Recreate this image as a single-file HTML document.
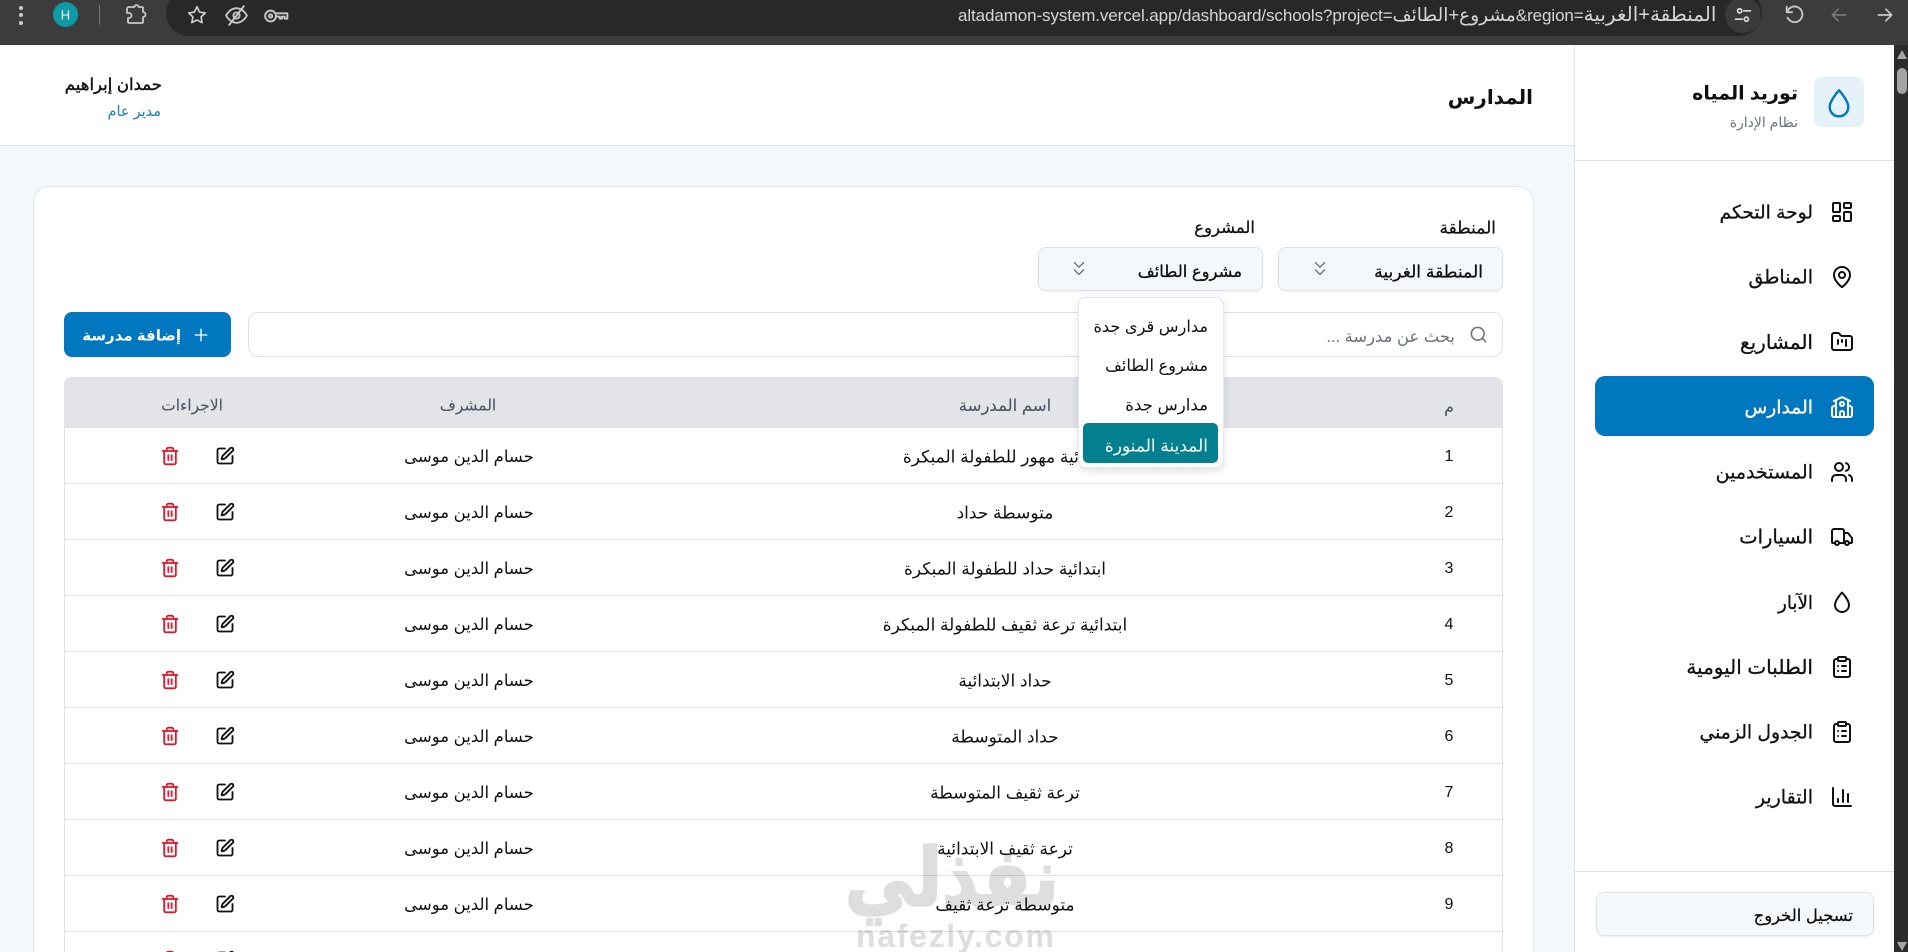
<!DOCTYPE html>
<html lang="ar">
<head>
<meta charset="utf-8">
<title>المدارس</title>
<style>
*{box-sizing:border-box;margin:0;padding:0}
html,body{width:1908px;height:952px;overflow:hidden;background:#f5f8fb;font-family:"Liberation Sans","DejaVu Sans",sans-serif;color:#111}
#w{position:relative;width:1908px;height:952px;overflow:hidden;background:#f5f8fb}
.a{position:absolute}
.t{position:absolute;white-space:nowrap;line-height:1;direction:rtl;transform:translateY(-50%)}
.c{position:absolute;white-space:nowrap;line-height:1;direction:rtl;transform:translate(-50%,-50%)}
svg{position:absolute;fill:none;stroke:currentColor;stroke-width:2;stroke-linecap:round;stroke-linejoin:round}
.line{position:absolute;left:64px;width:1439px;height:1px;background:#dfe2e6}
.nav{font-size:19px;font-weight:500;right:95px;-webkit-text-stroke:.3px #111}
.n{left:1005px;font-size:17px}
.s{left:469px;font-size:16.500px}
.d{left:1449px;font-size:16px}
.h{font-size:15.500px;color:#4b5563;-webkit-text-stroke:.1px #4b5563}
.p{stroke-width:2.200}
.r{color:#dc1a2b;stroke-width:2.200}
</style>
</head>
<body>
<div id="w">
<!-- browser chrome -->
<div class="a" style="left:0;top:0;width:1908px;height:45px;background:#3c3c3c"></div>
<div class="a" style="left:166px;top:-10px;width:1596px;height:46px;background:#282828;border-radius:23px"></div>
<div class="a" style="left:1725px;top:-3px;width:36px;height:36px;border-radius:50%;background:#3a3a3a"></div>
<div class="a" style="left:19px;top:6px;width:4px;height:4px;border-radius:50%;background:#ccc;box-shadow:0 7px 0 #ccc,0 15px 0 #ccc"></div>
<div class="a" style="left:53px;top:2px;width:25px;height:25px;border-radius:50%;background:#0e9aa7"></div>
<div class="c" style="left:65.500px;top:15px;font-size:13px;color:#fff">H</div>
<div class="a" style="left:99px;top:5px;width:1px;height:20px;background:#777"></div>
<svg style="left:123px;top:3px;color:#c8c8c8;stroke-width:1.800" width="24" height="24" viewBox="0 0 24 24"><path d="M9 4h2.500a2 2 0 0 1 4 0H19a1 1 0 0 1 1 1v4a2.500 2.500 0 0 1 0 5v5a1 1 0 0 1-1 1H6a1 1 0 0 1-1-1v-4h1a2 2 0 0 0 0-5H4V6a2 2 0 0 1 2-2z"/></svg>
<svg style="left:186px;top:4px;color:#d0d0d0;stroke-width:1.800" width="22" height="22" viewBox="0 0 24 24"><path d="M12 3l2.800 5.800 6.300.9-4.600 4.400 1.100 6.300L12 17.400l-5.600 3 1.100-6.300L2.900 9.700l6.300-.9z"/></svg>
<svg style="left:224px;top:3px;color:#c8c8c8;stroke-width:1.800" width="25" height="25" viewBox="0 0 24 24"><path d="M2 12s3.500-7 10-7 10 7 10 7-3.500 7-10 7-10-7-10-7z"/><circle cx="12" cy="12" r="3"/><path d="M19 3L5 21"/></svg>
<svg style="left:263px;top:3px;color:#c8c8c8;stroke-width:1.800" width="26" height="26" viewBox="0 0 24 24"><circle cx="7" cy="12" r="5"/><circle cx="7" cy="12" r="1.500"/><path d="M12 9.500H22.500v5h-2.500v-2h-2.500v2h-2v-2H12"/></svg>
<div class="a" style="left:958px;top:15px;transform:translateY(-50%);width:780px;font-size:17px;line-height:1;color:#d6d6d6;white-space:nowrap;direction:ltr;text-align:left;letter-spacing:-.1px"><span>altadamon-system.vercel.app/dashboard/schools?project=</span><span dir="rtl" style="font-size:18.500px">مشروع+الطائف</span><span>&amp;region=</span><span dir="rtl" style="font-size:20px">المنطقة+الغربية</span></div>
<svg style="left:1733px;top:5px;color:#ddd;stroke-width:2" width="20" height="20" viewBox="0 0 24 24"><circle cx="8" cy="7" r="2.500"/><path d="M13 7h8M3 17h8"/><circle cx="16" cy="17" r="2.500"/></svg>
<svg style="left:1783px;top:3px;color:#c9c9c9" width="22" height="22" viewBox="0 0 24 24"><path d="M4 4v6h6"/><path d="M4.500 10a8.500 8.500 0 1 1 .5 6"/></svg>
<svg style="left:1829px;top:5px;color:#777" width="20" height="20" viewBox="0 0 24 24"><path d="M20 12H4M11 5l-7 7 7 7"/></svg>
<svg style="left:1875px;top:5px;color:#c9c9c9" width="20" height="20" viewBox="0 0 24 24"><path d="M4 12h16M13 5l7 7-7 7"/></svg>

<!-- top header -->
<div class="a" style="left:0;top:45px;width:1575px;height:101px;background:#fff;border-bottom:1px solid #e2e6ea"></div>
<div class="t" style="right:1746px;top:85px;font-size:16.500px;font-weight:500;-webkit-text-stroke:.4px #111">حمدان إبراهيم</div>
<div class="t" style="right:1747px;top:112px;font-size:14.500px;color:#1a7fb8">مدير عام</div>
<div class="t" style="right:375px;top:98px;font-size:20px;font-weight:700">المدارس</div>

<!-- card -->
<div class="a" style="left:33px;top:186px;width:1501px;height:800px;background:#fff;border:1px solid #e2e6ea;border-radius:16px"></div>
<div class="t" style="right:412px;top:228px;font-size:17px;-webkit-text-stroke:.25px #111">المنطقة</div>
<div class="t" style="right:653px;top:228px;font-size:16.500px;-webkit-text-stroke:.25px #111">المشروع</div>
<div class="a" style="left:1278px;top:247px;width:225px;height:44px;background:#f5f8fb;border:1px solid #dfe3e8;border-radius:8px;box-shadow:0 1px 2px rgba(0,0,0,.08)"></div>
<div class="t" style="right:425px;top:272px;font-size:17.200px;-webkit-text-stroke:.3px #111">المنطقة الغربية</div>
<svg style="left:1308.500px;top:258px;color:#777;stroke-width:1.600" width="22" height="22" viewBox="0 0 24 24"><path d="M7 13l5 5 5-5M7 5l5 5 5-5"/></svg>
<div class="a" style="left:1038px;top:247px;width:225px;height:44px;background:#f5f8fb;border:1px solid #dfe3e8;border-radius:8px;box-shadow:0 1px 2px rgba(0,0,0,.08)"></div>
<div class="t" style="right:666px;top:272px;font-size:16.400px;-webkit-text-stroke:.3px #111">مشروع الطائف</div>
<svg style="left:1067.500px;top:258px;color:#777;stroke-width:1.600" width="22" height="22" viewBox="0 0 24 24"><path d="M7 13l5 5 5-5M7 5l5 5 5-5"/></svg>

<!-- search + add -->
<div class="a" style="left:248px;top:312px;width:1255px;height:45px;background:#fff;border:1px solid #dfe3e8;border-radius:10px"></div>
<svg style="left:1469px;top:325px;color:#6b7280" width="19" height="19" viewBox="0 0 24 24"><circle cx="11" cy="11" r="8"/><path d="M21 21l-4.300-4.300"/></svg>
<div class="t" style="right:453px;top:337px;font-size:16.400px;color:#6b7280">بحث عن مدرسة ...</div>
<div class="a" style="left:64px;top:312px;width:167px;height:45px;background:#0077be;border-radius:8px"></div>
<svg style="left:191px;top:325px;color:#fff;stroke-width:1.600" width="20" height="20" viewBox="0 0 24 24"><path d="M5 12h14M12 5v14"/></svg>
<div class="t" style="right:1727px;top:336px;font-size:15px;font-weight:700;color:#fff">إضافة مدرسة</div>

<!-- table -->
<div class="a" style="left:64px;top:377px;width:1439px;height:600px;border:1px solid #dfe2e6;border-radius:8px 8px 0 0"></div>
<div class="a" style="left:64px;top:377px;width:1439px;height:51px;background:#e2e4e8;border-radius:8px 8px 0 0"></div>
<div class="c h" style="left:1449px;top:408px">م</div>
<div class="c h" style="left:1005px;top:406px;font-size:16.500px">اسم المدرسة</div>
<div class="c h" style="left:468px;top:406px">المشرف</div>
<div class="c h" style="left:192px;top:406px">الاجراءات</div>

<div class="line" style="top:483px"></div><div class="line" style="top:539px"></div><div class="line" style="top:595px"></div><div class="line" style="top:651px"></div><div class="line" style="top:707px"></div><div class="line" style="top:763px"></div><div class="line" style="top:819px"></div><div class="line" style="top:875px"></div><div class="line" style="top:931px"></div>

<div class="c d" style="top:457px">1</div>
<div class="c n" style="top:457px">ابتدائية مهور للطفولة المبكرة</div>
<div class="c s" style="top:457px">حسام الدين موسى</div>
<div class="c d" style="top:513px">2</div>
<div class="c n" style="top:513px">متوسطة حداد</div>
<div class="c s" style="top:513px">حسام الدين موسى</div>
<div class="c d" style="top:569px">3</div>
<div class="c n" style="top:569px">ابتدائية حداد للطفولة المبكرة</div>
<div class="c s" style="top:569px">حسام الدين موسى</div>
<div class="c d" style="top:625px">4</div>
<div class="c n" style="top:625px">ابتدائية ترعة ثقيف للطفولة المبكرة</div>
<div class="c s" style="top:625px">حسام الدين موسى</div>
<div class="c d" style="top:681px">5</div>
<div class="c n" style="top:681px">حداد الابتدائية</div>
<div class="c s" style="top:681px">حسام الدين موسى</div>
<div class="c d" style="top:737px">6</div>
<div class="c n" style="top:737px">حداد المتوسطة</div>
<div class="c s" style="top:737px">حسام الدين موسى</div>
<div class="c d" style="top:793px">7</div>
<div class="c n" style="top:793px">ترعة ثقيف المتوسطة</div>
<div class="c s" style="top:793px">حسام الدين موسى</div>
<div class="c d" style="top:849px">8</div>
<div class="c n" style="top:849px">ترعة ثقيف الابتدائية</div>
<div class="c s" style="top:849px">حسام الدين موسى</div>
<div class="c d" style="top:905px">9</div>
<div class="c n" style="top:905px">متوسطة ترعة ثقيف</div>
<div class="c s" style="top:905px">حسام الدين موسى</div>

<svg width="0" height="0" style="position:absolute"><defs>
<g id="pen"><path d="M12 3H5a2 2 0 0 0-2 2v14a2 2 0 0 0 2 2h14a2 2 0 0 0 2-2v-7"/><path d="M18.375 2.625a1 1 0 0 1 3 3l-9.013 9.014a2 2 0 0 1-.853.505l-2.873.84a.500.500 0 0 1-.62-.62l.84-2.873a2 2 0 0 1 .506-.852z"/></g>
<g id="tr"><path d="M3 6h18"/><path d="M19 6v14c0 1-1 2-2 2H7c-1 0-2-1-2-2V6"/><path d="M8 6V4c0-1 1-2 2-2h4c1 0 2 1 2 2v2"/><path d="M10 11v6M14 11v6"/></g>
<g id="cl"><rect x="8" y="2" width="8" height="4" rx="1"/><path d="M16 4h2a2 2 0 0 1 2 2v14a2 2 0 0 1-2 2H6a2 2 0 0 1-2-2V6a2 2 0 0 1 2-2h2"/><path d="M12 11h4M12 16h4M8 11h.01M8 16h.01"/></g>
</defs></svg>
<svg class="p" style="left:214.500px;top:445.500px" width="20" height="20" viewBox="0 0 24 24"><use href="#pen"/></svg><svg class="r" style="left:160px;top:445.500px" width="20" height="20" viewBox="0 0 24 24"><use href="#tr"/></svg>
<svg class="p" style="left:214.500px;top:501.500px" width="20" height="20" viewBox="0 0 24 24"><use href="#pen"/></svg><svg class="r" style="left:160px;top:501.500px" width="20" height="20" viewBox="0 0 24 24"><use href="#tr"/></svg>
<svg class="p" style="left:214.500px;top:557.500px" width="20" height="20" viewBox="0 0 24 24"><use href="#pen"/></svg><svg class="r" style="left:160px;top:557.500px" width="20" height="20" viewBox="0 0 24 24"><use href="#tr"/></svg>
<svg class="p" style="left:214.500px;top:613.500px" width="20" height="20" viewBox="0 0 24 24"><use href="#pen"/></svg><svg class="r" style="left:160px;top:613.500px" width="20" height="20" viewBox="0 0 24 24"><use href="#tr"/></svg>
<svg class="p" style="left:214.500px;top:669.500px" width="20" height="20" viewBox="0 0 24 24"><use href="#pen"/></svg><svg class="r" style="left:160px;top:669.500px" width="20" height="20" viewBox="0 0 24 24"><use href="#tr"/></svg>
<svg class="p" style="left:214.500px;top:725.500px" width="20" height="20" viewBox="0 0 24 24"><use href="#pen"/></svg><svg class="r" style="left:160px;top:725.500px" width="20" height="20" viewBox="0 0 24 24"><use href="#tr"/></svg>
<svg class="p" style="left:214.500px;top:781.500px" width="20" height="20" viewBox="0 0 24 24"><use href="#pen"/></svg><svg class="r" style="left:160px;top:781.500px" width="20" height="20" viewBox="0 0 24 24"><use href="#tr"/></svg>
<svg class="p" style="left:214.500px;top:837.500px" width="20" height="20" viewBox="0 0 24 24"><use href="#pen"/></svg><svg class="r" style="left:160px;top:837.500px" width="20" height="20" viewBox="0 0 24 24"><use href="#tr"/></svg>
<svg class="p" style="left:214.500px;top:893.500px" width="20" height="20" viewBox="0 0 24 24"><use href="#pen"/></svg><svg class="r" style="left:160px;top:893.500px" width="20" height="20" viewBox="0 0 24 24"><use href="#tr"/></svg>
<svg class="p" style="left:214.500px;top:949.500px" width="20" height="20" viewBox="0 0 24 24"><use href="#pen"/></svg><svg class="r" style="left:160px;top:949.500px" width="20" height="20" viewBox="0 0 24 24"><use href="#tr"/></svg>

<!-- dropdown -->
<div class="a" style="left:1077.500px;top:297px;width:146px;height:171px;background:#fff;border:1px solid #e5e7eb;border-radius:8px;box-shadow:0 3px 8px rgba(0,0,0,.12)"></div>
<div class="a" style="left:1083px;top:423px;width:135px;height:40px;background:#028090;border-radius:5px"></div>
<div class="t" style="right:700px;top:327px;font-size:16.200px">مدارس قرى جدة</div>
<div class="t" style="right:700px;top:366px;font-size:16.200px">مشروع الطائف</div>
<div class="t" style="right:700px;top:406px;font-size:16.600px">مدارس جدة</div>
<div class="t" style="right:700px;top:446px;font-size:17px;color:#fff">المدينة المنورة</div>

<!-- sidebar -->
<div class="a" style="left:1574px;top:45px;width:320px;height:907px;background:#fff;border-left:1px solid #dfe3e8"></div>
<div class="a" style="left:1575px;top:160px;width:319px;height:1px;background:#dfe3e8"></div>
<div class="a" style="left:1814px;top:77px;width:50px;height:50px;background:#e6f2fa;border-radius:8px"></div>
<svg style="left:1823px;top:87px;color:#0077be;stroke-width:1.800" width="32" height="32" viewBox="0 0 24 24"><path d="M12 2.500C12 2.500 5 10 5 15a7 7 0 0 0 14 0C19 10 12 2.500 12 2.500z"/></svg>
<div class="t" style="right:110px;top:94px;font-size:19px;font-weight:700">توريد المياه</div>
<div class="t" style="right:110px;top:122px;font-size:14px;color:#6b7280">نظام الإدارة</div>

<div class="a" style="left:1595px;top:376px;width:279px;height:60px;background:#0077be;border-radius:10px"></div>

<div class="t nav" style="top:213px;font-size:18.700px">لوحة التحكم</div>
<svg style="left:1830px;top:200px" width="24" height="24" viewBox="0 0 24 24"><rect x="3" y="3" width="7" height="9" rx="1"/><rect x="14" y="3" width="7" height="5" rx="1"/><rect x="14" y="12" width="7" height="9" rx="1"/><rect x="3" y="16" width="7" height="5" rx="1"/></svg>
<div class="t nav" style="top:278px">المناطق</div>
<svg style="left:1830px;top:265px" width="24" height="24" viewBox="0 0 24 24"><path d="M20 10c0 4.993-5.539 10.193-7.399 11.799a1 1 0 0 1-1.202 0C9.539 20.193 4 14.993 4 10a8 8 0 0 1 16 0"/><circle cx="12" cy="10" r="3"/></svg>
<div class="t nav" style="top:343px;font-size:20px">المشاريع</div>
<svg style="left:1830px;top:330px" width="24" height="24" viewBox="0 0 24 24"><path d="M4 20h16a2 2 0 0 0 2-2V8a2 2 0 0 0-2-2h-7.930a2 2 0 0 1-1.660-.9l-.82-1.200A2 2 0 0 0 7.930 3H4a2 2 0 0 0-2 2v13c0 1.100.9 2 2 2Z"/><path d="M8 10v4M12 10v2M16 10v6"/></svg>
<div class="t nav" style="top:408px;font-size:18.700px;color:#fff;-webkit-text-stroke:.3px #fff">المدارس</div>
<svg style="left:1830px;top:395px;color:#fff" width="24" height="24" viewBox="0 0 24 24"><path d="M14 22v-4a2 2 0 1 0-4 0v4"/><path d="M18 10l3.447 1.724a1 1 0 0 1 .553.894V20a2 2 0 0 1-2 2H4a2 2 0 0 1-2-2v-7.382a1 1 0 0 1 .553-.894L6 10"/><path d="M18 5v17"/><path d="M4 6l7.106-3.553a2 2 0 0 1 1.788 0L20 6"/><path d="M6 5v17"/><circle cx="12" cy="9" r="2"/></svg>
<div class="t nav" style="top:473px">المستخدمين</div>
<svg style="left:1830px;top:460px" width="24" height="24" viewBox="0 0 24 24"><path d="M16 21v-2a4 4 0 0 0-4-4H6a4 4 0 0 0-4 4v2"/><circle cx="9" cy="7" r="4"/><path d="M22 21v-2a4 4 0 0 0-3-3.870"/><path d="M16 3.130a4 4 0 0 1 0 7.750"/></svg>
<div class="t nav" style="top:538px;font-size:19.500px">السيارات</div>
<svg style="left:1830px;top:525px" width="24" height="24" viewBox="0 0 24 24"><path d="M14 18V6a2 2 0 0 0-2-2H4a2 2 0 0 0-2 2v11a1 1 0 0 0 1 1h2"/><path d="M15 18H9"/><path d="M19 18h2a1 1 0 0 0 1-1v-3.650a1 1 0 0 0-.22-.624l-3.480-4.350A1 1 0 0 0 17.520 8H14"/><circle cx="17" cy="18" r="2"/><circle cx="7" cy="18" r="2"/></svg>
<div class="t nav" style="top:603px;font-size:18.300px">الآبار</div>
<svg style="left:1830px;top:590px" width="24" height="24" viewBox="0 0 24 24"><path d="M12 2.500C12 2.500 5 10 5 15a7 7 0 0 0 14 0C19 10 12 2.500 12 2.500z"/></svg>
<div class="t nav" style="top:668px;font-size:20px">الطلبات اليومية</div>
<svg style="left:1830px;top:655px" width="24" height="24" viewBox="0 0 24 24"><use href="#cl"/></svg>
<div class="t nav" style="top:733px;font-size:18.800px">الجدول الزمني</div>
<svg style="left:1830px;top:720px" width="24" height="24" viewBox="0 0 24 24"><use href="#cl"/></svg>
<div class="t nav" style="top:798px">التقارير</div>
<svg style="left:1830px;top:785px" width="24" height="24" viewBox="0 0 24 24"><path d="M3 3v16a2 2 0 0 0 2 2h16"/><path d="M18 17V9M13 17V5M8 17v-3"/></svg>

<div class="a" style="left:1575px;top:871px;width:319px;height:1px;background:#dfe3e8"></div>
<div class="a" style="left:1596px;top:892px;width:278px;height:44px;background:#f5f8fb;border:1px solid #dfe3e8;border-radius:8px;box-shadow:0 1px 2px rgba(0,0,0,.08)"></div>
<div class="t" style="right:55px;top:916px;font-size:16.400px;-webkit-text-stroke:.25px #111">تسجيل الخروج</div>

<!-- scrollbar -->
<div class="a" style="left:1894px;top:45px;width:14px;height:907px;background:#2c2c2c"></div>
<div class="a" style="left:1897px;top:50px;width:0;height:0;border-left:5px solid transparent;border-right:5px solid transparent;border-bottom:9px solid #a6a6a6"></div>
<div class="a" style="left:1897px;top:68px;width:10px;height:26px;background:#a3a3a3;border-radius:5px"></div>
<div class="a" style="left:1897px;top:942px;width:0;height:0;border-left:5px solid transparent;border-right:5px solid transparent;border-top:9px solid #a6a6a6"></div>

<!-- watermark -->
<div class="c" style="left:952px;top:878px;font-size:70px;font-weight:700;color:#dedede;-webkit-text-stroke:2px #dedede;mix-blend-mode:multiply;transform:translate(-50%,-50%) scaleY(1.150)">نفذلي</div>
<div class="a" style="left:856px;top:920px;width:210px;font-size:32px;line-height:1;font-weight:700;letter-spacing:1.700px;color:#dedede;white-space:nowrap;mix-blend-mode:multiply">nafezly.com</div>
</div>
</body>
</html>
